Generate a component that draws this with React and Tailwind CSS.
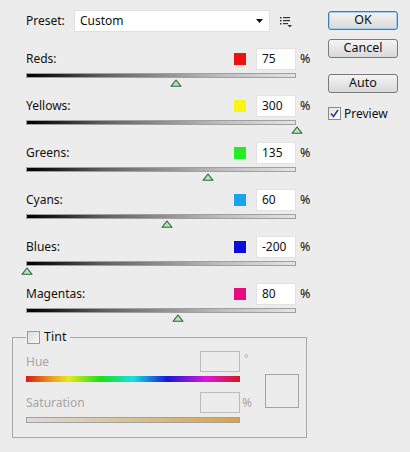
import React from "react";

const channels = [
  { name: "Reds:", color: "#ee1111", value: 75 },
  { name: "Yellows:", color: "#f6f614", value: 300 },
  { name: "Greens:", color: "#22ee22", value: 135 },
  { name: "Cyans:", color: "#1ba4ee", value: 60 },
  { name: "Blues:", color: "#0b0bdc", value: -200 },
  { name: "Magentas:", color: "#e80c7e", value: 80 },
];

function Thumb({ value }) {
  const left = ((value + 200) / 500) * 270 - 6;
  return (
    <svg
      className="absolute top-[5px]"
      style={{ left }}
      width="12"
      height="8"
      viewBox="0 0 12 8"
    >
      <polygon points="6,1 11,7.3 1,7.3" fill="#b8e2b8" stroke="#2f6a3e" strokeWidth="1.1" strokeLinejoin="round" />
    </svg>
  );
}

function Channel({ name, color, value }) {
  return (
    <div className="w-[286px] mb-[17px]">
      <div className="flex items-center h-[22px]">
        <span className="flex-1">{name}</span>
        <span className="w-[12px] h-[12px]" style={{ backgroundColor: color }} />
        <div className="ml-[10px] w-[40px] h-[22px] bg-white border border-[#e2e2e2] flex items-center pl-[5px]">
          {value}
        </div>
        <span className="ml-[4px] w-[12px] text-[12.5px]">%</span>
      </div>
      <div className="relative mt-[3px] w-[270px] h-[5px] border border-[#a0a0a0] bg-[linear-gradient(to_right,#000000,#1c1c1c_10%,#5e5e5e_28%,#8e8e8e_50%,#bdbdbd_72%,#e4e4e4)]">
        <Thumb value={value} />
      </div>
    </div>
  );
}

function Button({ children, primary }) {
  return (
    <div
      className={
        "w-[70px] h-[19px] rounded-[3px] border flex items-center justify-center text-[12.5px] bg-[linear-gradient(to_bottom,#f4f4f4,#e6e6e6_50%,#d9d9d9)] " +
        (primary ? "border-[#3c7fb1] shadow-[inset_0_0_0_1px_#9fd0f0]" : "border-[#7a7a7a]")
      }
    >
      {children}
    </div>
  );
}

export default function App() {
  return (
    <div
      className="w-[410px] h-[452px] bg-[#ececec] flex text-[12px] text-[#111] leading-none"
      style={{ fontFamily: '"Noto Sans", "Open Sans", sans-serif' }}
    >
      <div className="w-[316px] pl-[12px] pt-[10px]">
        <div className="flex items-center h-[22px] pl-[14px]">
          <span className="w-[48px]">Preset:</span>
          <div className="w-[196px] h-[22px] bg-white border border-[#e0e0e0] flex items-center pl-[5px] pr-[6px]">
            <span className="flex-1">Custom</span>
            <svg width="7" height="4" viewBox="0 0 7 4">
              <polygon points="0,0 7,0 3.5,4" fill="#111" />
            </svg>
          </div>
          <svg className="ml-[10px] mt-[1px]" width="12" height="12" viewBox="0 0 12 12">
            <rect x="0" y="1" width="1.5" height="1.5" fill="#333" />
            <rect x="3" y="1" width="7" height="1.2" fill="#333" />
            <rect x="0" y="4" width="1.5" height="1.5" fill="#333" />
            <rect x="3" y="4" width="7" height="1.2" fill="#333" />
            <rect x="0" y="7" width="1.5" height="1.5" fill="#333" />
            <rect x="3" y="7" width="5" height="1.2" fill="#333" />
            <polygon points="7.5,9 12,9 9.75,11.5" fill="#333" />
          </svg>
        </div>

        <div className="mt-[16px] pl-[14px]">
          {channels.map((c) => (
            <Channel key={c.name} {...c} />
          ))}
        </div>

        <fieldset className="mt-[1px] w-[295px] min-w-0 h-[108px] border border-[#a8a8a8] pl-[13px] pr-[7px]">
          <legend className="ml-0 px-[1px] flex items-center h-[14px]">
            <span className="w-[13px] h-[13px] border border-[#9a9a9a] bg-[linear-gradient(135deg,#dcdcdc,#f8f8f8)]" />
            <span className="ml-[4px] pr-[3px] text-[12.5px]">Tint</span>
          </legend>
          <div className="flex pt-[7px]">
            <div className="w-[230px] text-[#a6a6a6]">
              <div className="flex items-center h-[21px]">
                <span className="w-[174px]">Hue</span>
                <div className="w-[40px] h-[21px] border border-[#bcbcbc] bg-[#ececec]" />
                <span className="ml-[4px] self-start mt-[2px] text-[10px]">°</span>
              </div>
              <div className="mt-[4px] w-[214px] h-[6px] bg-[linear-gradient(to_right,#d81818,#e8a020_12%,#e8e818_20%,#18e018_35%,#18e0e0_50%,#1818d8_66%,#d818d8_84%,#d81818)]" />
              <div className="flex items-center h-[21px] mt-[10px]">
                <span className="w-[174px]">Saturation</span>
                <div className="w-[40px] h-[21px] border border-[#bcbcbc] bg-[#ececec]" />
                <span className="ml-[2px] text-[12px]">%</span>
              </div>
              <div className="mt-[4px] w-[214px] h-[6px] border border-[#a0a0a0] bg-[linear-gradient(to_right,#dcdcdc,#d9c49a_45%,#d8a448)]" />
            </div>
            <div className="ml-[9px] mt-[23px] w-[34px] h-[34px] border border-[#a4a4a4]" />
          </div>
        </fieldset>
      </div>

      <div className="pl-[12px] pt-[11px] flex flex-col">
        <Button primary>OK</Button>
        <div className="mt-[9px]">
          <Button>Cancel</Button>
        </div>
        <div className="mt-[16px]">
          <Button>Auto</Button>
        </div>
        <div className="mt-[14px] flex items-center">
          <span className="w-[13px] h-[13px] border border-[#8a8a8a] bg-[linear-gradient(135deg,#e4e4e4,#ffffff)] flex items-center justify-center">
            <svg width="9" height="9" viewBox="0 0 9 9">
              <path d="M1 4.5 L3.5 7.5 L8 1" fill="none" stroke="#2a3e8c" strokeWidth="1.6" />
            </svg>
          </span>
          <span className="ml-[3px] text-[12px]">Preview</span>
        </div>
      </div>
    </div>
  );
}
